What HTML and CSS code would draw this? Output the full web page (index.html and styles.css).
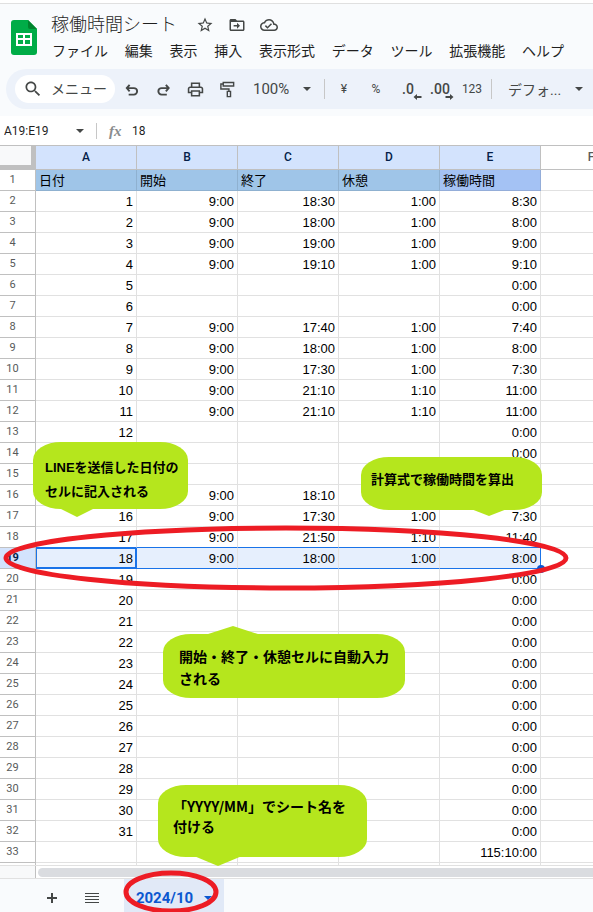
FILE: index.html
```html
<!DOCTYPE html>
<html lang="ja">
<head>
<meta charset="utf-8">
<meta name="viewport" content="width=device-width, initial-scale=1">
<title>稼働時間シート</title>
<link rel="stylesheet" href="styles.css">
</head>
<body>
<div class="page">
  <header class="top">
    <div class="title-area">
      <svg class="logo" viewBox="0 0 26 35" aria-hidden="true">
        <path fill="#00ac47" d="M3 0h14l9 9v23a3 3 0 0 1-3 3H3a3 3 0 0 1-3-3V3a3 3 0 0 1 3-3z"/>
        <path fill="#00832d" d="M17 0l9 9h-7a2 2 0 0 1-2-2z"/>
        <path fill="#fff" fill-rule="evenodd" d="M5 13h16v13H5zM7 15v3h5v-3zM14 15v3h5v-3zM7 20v4h5v-4zM14 20v4h5v-4z"/>
      </svg>
      <div class="title-main">
        <div class="title-row">
          <h1 class="title">稼働時間シート</h1>
          <button class="title-btn" aria-label="スター"><svg viewBox="0 0 24 24"><path d="M22 9.24l-7.19-.62L12 2 9.19 8.63 2 9.24l5.46 4.73L5.82 21 12 17.27 18.18 21l-1.63-7.03L22 9.24zM12 15.4l-3.76 2.27 1-4.28-3.32-2.88 4.38-.38L12 6.1l1.71 4.04 4.38.38-3.32 2.88 1 4.28L12 15.4z"/></svg></button>
          <button class="title-btn" aria-label="移動"><svg viewBox="0 0 24 24"><path d="M20 6h-8l-2-2H4c-1.1 0-2 .9-2 2v12c0 1.1.9 2 2 2h16c1.1 0 2-.9 2-2V8c0-1.1-.9-2-2-2zm0 12H4V8h16v10zM12 17l4-4-4-4v3H7.500v2H12z"/></svg></button>
          <button class="title-btn" aria-label="保存済み"><svg viewBox="0 0 24 24"><path d="M19.35 10.04C18.67 6.59 15.64 4 12 4 9.110 4 6.600 5.640 5.350 8.040 2.340 8.360 0 10.910 0 14c0 3.310 2.690 6 6 6h13c2.760 0 5-2.240 5-5 0-2.640-2.050-4.780-4.650-4.960zM19 18H6c-2.210 0-4-1.790-4-4 0-2.050 1.530-3.760 3.560-3.970l1.070-.11.5-.95C8.080 7.140 9.940 6 12 6c2.620 0 4.880 1.860 5.390 4.430l.3 1.500 1.530.11c1.560.1 2.780 1.410 2.780 2.960 0 1.650-1.350 3-3 3zm-9-3.820l-2.090-2.090L6.500 13.500 10 17l6.010-6.010-1.410-1.410z"/></svg></button>
        </div>
        <nav class="menu">
          <button>ファイル</button><button>編集</button><button>表示</button><button>挿入</button><button>表示形式</button><button>データ</button><button>ツール</button><button>拡張機能</button><button>ヘルプ</button>
        </nav>
      </div>
    </div>
    <div class="toolbar">
      <label class="search">
        <svg viewBox="0 0 24 24"><path d="M15.5 14h-.79l-.28-.27C15.41 12.59 16 11.11 16 9.5 16 5.91 13.09 3 9.5 3S3 5.91 3 9.5 5.91 16 9.5 16c1.61 0 3.09-.59 4.23-1.57l.27.28v.79l5 4.99L20.49 19l-4.99-5zm-6 0C7.01 14 5 11.99 5 9.5S7.01 5 9.5 5 14 7.01 14 9.5 11.99 14 9.5 14z"/></svg>
        <input type="text" placeholder="メニュー" aria-label="メニュー">
      </label>
      <button class="tool" aria-label="元に戻す"><svg viewBox="0 0 18 18"><path class="line" d="M7 4L4 7.500l3 3.500M4 7.500h7.500a3.200 3.200 0 0 1 0 6.900H6"/></svg></button>
      <button class="tool" aria-label="やり直し"><svg viewBox="0 0 18 18"><path class="line" d="M11.500 4l3 3.500-3 3.500M14.500 7.500H7a3.200 3.200 0 0 0 0 6.900h5.500"/></svg></button>
      <button class="tool" aria-label="印刷"><svg viewBox="1 2 22 20"><path d="M19 8h-1V3H6v5H5c-1.660 0-3 1.340-3 3v6h4v4h12v-4h4v-6c0-1.660-1.340-3-3-3zM8 5h8v3H8V5zm8 12v2H8v-4h8v2zm2-2v-2H6v2H4v-4c0-.55.45-1 1-1h14c.55 0 1 .45 1 1v4h-2z"/></svg></button>
      <button class="tool" aria-label="書式を貼り付け"><svg viewBox="0 0 18 18"><path class="line thin" d="M4.500 1.500h11v3.800h-11zM4.500 3.200H2v5.300h8.500V11M8.800 11h3.400v5.500H8.800z"/></svg></button>
      <button class="zoom">100%<i class="caret"></i></button>
      <span class="sep"></span>
      <button class="tool small">¥</button>
      <button class="tool small">%</button>
      <button class="tool decimal" aria-label="小数点以下の桁数を減らす"><span>.0</span><svg viewBox="0 0 8 6"><path d="M3.500 0v2H8v2H3.500v2L0 3z"/></svg></button>
      <button class="tool decimal" aria-label="小数点以下の桁数を増やす"><span>.00</span><svg viewBox="0 0 8 6"><path d="M4.500 0v2H0v2h4.500v2L8 3z"/></svg></button>
      <button class="tool small">123</button>
      <span class="sep"></span>
      <button class="font-pick">デフォ...<i class="caret"></i></button>
    </div>
  </header>

  <div class="formula-bar">
    <input class="name-box" type="text" value="A19:E19" aria-label="名前ボックス">
    <button class="name-caret" aria-label="範囲を選択"><i class="caret"></i></button>
    <span class="fx">fx</span>
    <input class="formula" type="text" value="18" aria-label="数式">
  </div>

  <main class="sheet">
    <table>
      <colgroup><col class="c-num"><col><col><col><col><col><col></colgroup>
      <thead><tr><th class="corner"></th><th class="on">A</th><th class="on">B</th><th class="on">C</th><th class="on">D</th><th class="on">E</th><th>F</th></tr></thead>
      <tbody>
        <tr class="labels"><th>1</th><td>日付</td><td>開始</td><td>終了</td><td>休憩</td><td class="total">稼働時間</td><td></td></tr>
        <tr><th>2</th><td>1</td><td>9:00</td><td>18:30</td><td>1:00</td><td>8:30</td><td></td></tr>
        <tr><th>3</th><td>2</td><td>9:00</td><td>18:00</td><td>1:00</td><td>8:00</td><td></td></tr>
        <tr><th>4</th><td>3</td><td>9:00</td><td>19:00</td><td>1:00</td><td>9:00</td><td></td></tr>
        <tr><th>5</th><td>4</td><td>9:00</td><td>19:10</td><td>1:00</td><td>9:10</td><td></td></tr>
        <tr><th>6</th><td>5</td><td></td><td></td><td></td><td>0:00</td><td></td></tr>
        <tr><th>7</th><td>6</td><td></td><td></td><td></td><td>0:00</td><td></td></tr>
        <tr><th>8</th><td>7</td><td>9:00</td><td>17:40</td><td>1:00</td><td>7:40</td><td></td></tr>
        <tr><th>9</th><td>8</td><td>9:00</td><td>18:00</td><td>1:00</td><td>8:00</td><td></td></tr>
        <tr><th>10</th><td>9</td><td>9:00</td><td>17:30</td><td>1:00</td><td>7:30</td><td></td></tr>
        <tr><th>11</th><td>10</td><td>9:00</td><td>21:10</td><td>1:10</td><td>11:00</td><td></td></tr>
        <tr><th>12</th><td>11</td><td>9:00</td><td>21:10</td><td>1:10</td><td>11:00</td><td></td></tr>
        <tr><th>13</th><td>12</td><td></td><td></td><td></td><td>0:00</td><td></td></tr>
        <tr><th>14</th><td></td><td></td><td></td><td></td><td>0:00</td><td></td></tr>
        <tr><th>15</th><td></td><td></td><td></td><td></td><td></td><td></td></tr>
        <tr><th>16</th><td></td><td>9:00</td><td>18:10</td><td></td><td></td><td></td></tr>
        <tr><th>17</th><td>16</td><td>9:00</td><td>17:30</td><td>1:00</td><td>7:30</td><td></td></tr>
        <tr class="before"><th>18</th><td>17</td><td>9:00</td><td>21:50</td><td>1:10</td><td>11:40</td><td></td></tr>
        <tr class="selected"><th>19</th><td class="active">18</td><td>9:00</td><td>18:00</td><td>1:00</td><td class="last">8:00</td><td></td></tr>
        <tr><th>20</th><td>19</td><td></td><td></td><td></td><td>0:00</td><td></td></tr>
        <tr><th>21</th><td>20</td><td></td><td></td><td></td><td>0:00</td><td></td></tr>
        <tr><th>22</th><td>21</td><td></td><td></td><td></td><td>0:00</td><td></td></tr>
        <tr><th>23</th><td>22</td><td></td><td></td><td></td><td>0:00</td><td></td></tr>
        <tr><th>24</th><td>23</td><td></td><td></td><td></td><td>0:00</td><td></td></tr>
        <tr><th>25</th><td>24</td><td></td><td></td><td></td><td>0:00</td><td></td></tr>
        <tr><th>26</th><td>25</td><td></td><td></td><td></td><td>0:00</td><td></td></tr>
        <tr><th>27</th><td>26</td><td></td><td></td><td></td><td>0:00</td><td></td></tr>
        <tr><th>28</th><td>27</td><td></td><td></td><td></td><td>0:00</td><td></td></tr>
        <tr><th>29</th><td>28</td><td></td><td></td><td></td><td>0:00</td><td></td></tr>
        <tr><th>30</th><td>29</td><td></td><td></td><td></td><td>0:00</td><td></td></tr>
        <tr><th>31</th><td>30</td><td></td><td></td><td></td><td>0:00</td><td></td></tr>
        <tr><th>32</th><td>31</td><td></td><td></td><td></td><td>0:00</td><td></td></tr>
        <tr><th>33</th><td></td><td></td><td></td><td></td><td>115:10:00</td><td></td></tr>
        <tr class="cut"><th></th><td></td><td></td><td></td><td></td><td></td><td></td></tr>
      </tbody>
    </table>
  </main>

  <div class="scroll"><span class="scroll-gutter"></span><span class="thumb"></span></div>

  <footer class="tabs">
    <button class="tab-icon" aria-label="シートを追加"><svg viewBox="0 0 12 12"><path d="M5 1h2v4h4v2H7v4H5V7H1V5h4z"/></svg></button>
    <button class="tab-icon wide" aria-label="すべてのシート"><svg viewBox="0 0 14 12"><path d="M0 1h14v1H0zM0 4h14v1H0zM0 7h14v1H0zM0 10h14v1H0z"/></svg></button>
    <button class="tab">2024/10<i class="caret"></i></button>
  </footer>

  <div class="bubble b1">LINEを送信した日付の<br>セルに記入される</div>
  <div class="bubble b2">計算式で稼働時間を算出</div>
  <div class="bubble up b3">開始・終了・休憩セルに自動入力<br>される</div>
  <div class="bubble b4">「YYYY/MM」でシート名を<br>付ける</div>
  <svg class="ring r1" viewBox="0 0 566 66" aria-hidden="true"><ellipse cx="283" cy="33" rx="280" ry="30"/></svg>
  <svg class="ring r2" viewBox="0 0 96 44" aria-hidden="true"><ellipse cx="48" cy="22" rx="45" ry="19"/></svg>
</div>
</body>
</html>
```

FILE: styles.css
```css
* { box-sizing: border-box; }
body { margin: 0; background: #fff; color: #1f1f1f; font-family: "Liberation Sans", "Noto Sans CJK JP", sans-serif; }
button, input { margin: 0; padding: 0; border: 0; background: none; color: inherit; font: inherit; white-space: nowrap; }
svg { display: block; fill: #444746; }

.page { position: relative; display: flex; flex-direction: column; min-height: 100vh; overflow: hidden; }

/* Title and menus */
.top { margin-top: 3px; padding-bottom: 7px; border-top: 1px solid #e0e0e0; background: #f9fbfd; }
.title-area { display: flex; padding: 8px 29px 0 11px; gap: 12px; }
.logo { width: 26px; height: 35px; margin-top: 8px; flex: none; }
.title-main { flex: 1; min-width: 0; }
.title-row { display: flex; align-items: center; height: 26px; }
.title { margin: 0 18px 0 2px; font-size: 18px; line-height: 24px; font-weight: 300; }
.title-btn { width: 32px; display: flex; justify-content: center; }
.title-btn:nth-child(2) { width: 20px; margin-right: 6px; }
.title-btn svg { width: 18px; height: 18px; }
.menu { display: flex; justify-content: space-between; padding-left: 3px; height: 26px; font-size: 14px; line-height: 26px; font-weight: 400; }

/* Toolbar */
.toolbar { display: flex; align-items: center; height: 40px; margin: 5px 0 0 6px; padding-left: 9px; border-radius: 20px 0 0 20px; background: #edf2fa; color: #444746; font-family: Roboto, "Noto Sans CJK JP", sans-serif; }
.toolbar > * { flex: none; }
.search { display: flex; align-items: center; gap: 8px; width: 100px; height: 28px; padding-left: 8px; border-radius: 14px; background: #fff; }
.search svg { width: 20px; height: 20px; flex: none; }
.search input { width: 60px; font-size: 14px; outline: 0; }
.search input::placeholder { color: #444746; opacity: 1; }
.tool { display: flex; align-items: center; justify-content: center; width: 32px; height: 32px; }
.tool svg { width: 17px; height: 17px; }
.line { fill: none; stroke: #444746; stroke-width: 2; }
.thin { stroke-width: 1.5; }
.small { font-size: 12px; }
.decimal { flex-direction: column; padding-top: 3px; font-size: 14px; line-height: 14px; font-weight: 500; }
.tool.decimal svg { width: 9px; height: 6px; margin: -2px 0 0 18px; }
.zoom { display: flex; align-items: center; justify-content: space-between; width: 58px; margin: 0 10px; font-size: 15px; }
.caret { display: block; flex: none; width: 8px; height: 4px; border: solid transparent; border-width: 4px 4px 0; border-top-color: currentColor; }
.sep { width: 1px; height: 20px; margin: 0 3px; background: #c7c7c7; }
.font-pick { display: flex; align-items: center; gap: 14px; margin-left: 13px; font-size: 14px; }

/* Formula bar */
.formula-bar { display: flex; align-items: center; height: 29px; padding-left: 4px; font-family: Roboto, "Noto Sans CJK JP", sans-serif; font-size: 12px; }
.name-box { width: 72px; }
.name-caret { display: flex; align-items: center; width: 21px; height: 16px; border-right: 1px solid #c7c7c7; color: #444746; }
.fx { width: 35px; padding-left: 12px; color: #8a8c8e; font: italic 700 15px/20px "Liberation Serif", serif; }
.formula { flex: 1; min-width: 0; }

/* Grid */
.sheet { overflow: hidden; border-top: 1px solid #c0c0c0; }
table { width: 642px; table-layout: fixed; border-collapse: separate; border-spacing: 0; }
col { width: 101px; }
.c-num { width: 36px; }
th, td { height: 21px; padding: 0 3px; border: solid #e1e1e1; border-width: 0 1px 1px 0; font-size: 13px; line-height: 20px; font-weight: 400; white-space: nowrap; overflow: hidden; }
td { padding-top: 2px; line-height: 18px; color: #000; text-align: right; }
th { border-color: #c0c0c0; color: #575a5a; font-family: Roboto, sans-serif; font-size: 11px; }
tbody th { padding: 0 10px 0 0; text-align: center; }
thead th { height: 24px; line-height: 23px; font-weight: 500; font-size: 12px; }
.corner { border-width: 0 5px 5px 0; background: #f8f9fa; }
.on { background: #d3e3fd; color: #041e49; }
.labels td { text-align: left; }
.labels td:not(:last-child) { border-color: #8fb1d0; background: #9fc5e8; }
.labels td.total { border-color: #94add9; background: #a4c2f4; }
.before td:not(:last-child) { border-bottom-color: #1a73e8; }
.selected th { background: #d3e3fd; color: #041e49; font-weight: 700; }
.selected td:not(:last-child) { border-bottom-color: #1a73e8; background: #e6effd; }
.selected td.active { border-right-color: #1a73e8; box-shadow: inset 1px 1px #1a73e8, inset -1px -1px #1a73e8; }
.selected td.last { position: relative; overflow: visible; border-right-color: #1a73e8; }
.last::after { content: ""; position: absolute; right: -5px; bottom: -5px; width: 8px; height: 8px; border-radius: 50%; background: #0b57d0; }
.cut th, .cut td { height: 2px; padding: 0; line-height: 0; border-bottom: 0; }

/* Scrollbar and sheet tabs */
.scroll { display: flex; align-items: center; height: 14px; border: solid #e1e1e1; border-width: 1px 0; }
.scroll-gutter { width: 36px; height: 12px; border-right: 1px solid #c0c0c0; background: #f8f9fa; }
.thumb { flex: 1; height: 9px; margin-left: 2px; border-radius: 5px 0 0 5px; background: #dadce0; }
.tabs { display: flex; flex: 1; min-height: 33px; padding-left: 32px; background: #f9fbfd; }
.tab-icon { display: flex; align-items: center; justify-content: center; width: 40px; padding-top: 4px; }
.tab-icon svg { width: 12px; height: 12px; }
.tab-icon.wide svg { width: 14px; }
.tab { display: flex; align-items: center; justify-content: center; gap: 11px; width: 100px; margin-left: 12px; padding-top: 5px; background: #e1e9f7; color: #0b57d0; font: 700 15px/20px Roboto, sans-serif; }

/* Callouts drawn over the sheet */
.bubble { position: absolute; border-radius: 28px / 18px; background: #b5e61d; color: #000; font-weight: 700; font-size: 13px; line-height: 24px; white-space: nowrap; }
.bubble::after { content: ""; position: absolute; left: 26px; top: calc(100% - 1px); width: 36px; height: 9px; background: inherit; clip-path: polygon(0 0, 100% 0, 50% 100%); }
.up::after { top: auto; bottom: calc(100% - 1px); clip-path: polygon(0 100%, 50% 0, 100% 100%); }
.b1 { left: 33px; top: 442px; width: 155px; height: 67px; padding: 14px 0 0 12px; }
.b2 { left: 361px; top: 457px; width: 181px; height: 53px; padding: 11px 0 0 10px; }
.b2::after { left: 110px; height: 7px; }
.b3 { left: 163px; top: 634px; width: 242px; height: 64px; padding: 12px 0 0 16px; font-size: 14px; line-height: 22px; }
.b3::after { left: 42px; width: 56px; }
.b4 { left: 158px; top: 785px; width: 209px; height: 72px; padding: 11px 0 0 15px; font-family: "Liberation Sans Narrow", "Noto Sans CJK JP", sans-serif; font-size: 14px; line-height: 20px; }
.b4::after { left: 36px; width: 48px; height: 10px; }
.ring { position: absolute; fill: none; stroke: #ed1c24; stroke-width: 5; }
.r1 { left: 3px; top: 525px; width: 566px; height: 66px; }
.r2 { left: 123px; top: 870px; width: 96px; height: 44px; }
```
